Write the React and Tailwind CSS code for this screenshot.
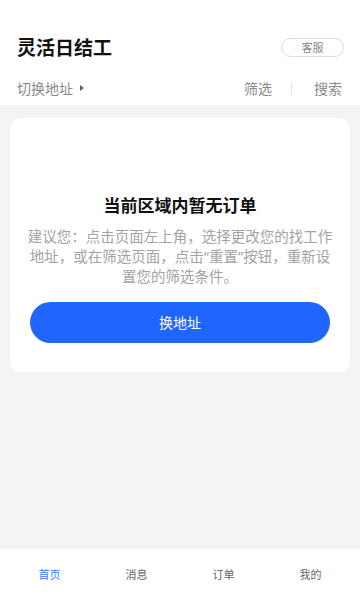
import React from 'react';

const tabs = ['首页', '消息', '订单', '我的'];

const Q = ({ children }) => (
  <span style={{ fontFamily: '"Noto Sans", sans-serif' }}>{children}</span>
);

const App = () => {
  return (
    <div
      className="h-[600px] w-[360px] flex flex-col bg-white overflow-hidden"
      style={{ fontFamily: '"Noto Sans CJK SC", "Noto Sans", sans-serif' }}
    >
      {/* Header */}
      <div className="h-[105px] shrink-0 bg-white">
        <div className="mt-[34px] h-[26px] px-[17px] flex items-center justify-between">
          <h1 className="text-[19px] font-bold text-[#111] leading-[26px]">灵活日结工</h1>
          <button className="w-[63px] h-[19px] mr-[-1px] rounded-full border border-[#dcdcdc] text-[11px] text-[#888] leading-none flex items-center justify-center">
            客服
          </button>
        </div>
        <div className="mt-[17px] h-[22px] pl-[17px] pr-[18px] flex items-center justify-between text-[14px] text-[#8a8a8a]">
          <div className="flex items-center gap-[7px]">
            <span>切换地址</span>
            <span className="w-0 h-0 border-y-[3.5px] border-y-transparent border-l-[4px] border-l-[#666]" />
          </div>
          <div className="flex items-center">
            <span className="ml-[2px]">筛选</span>
            <span className="mx-[19px] w-px h-[13px] bg-[#e5e5e5]" />
            <span className="ml-[3px]">搜索</span>
          </div>
        </div>
      </div>

      {/* Content */}
      <div className="flex-1 bg-[#f3f4f6] pt-[13px] px-[10px]">
        <div className="bg-white rounded-[10px] h-[254px] pt-[75px] px-[12px] text-center">
          <h2 className="text-[17px] font-bold text-[#111] leading-[24px]">当前区域内暂无订单</h2>
          <p className="mt-[9px] text-[14.5px] leading-[20px] text-[#a3a3a3] whitespace-nowrap">
            建议您：点击页面左上角，选择更改您的找工作
            <br />
            地址，或在筛选页面，点击<Q>“</Q>重置<Q>”</Q>按钮，重新设
            <br />
            置您的筛选条件。
          </p>
          <button className="mt-[16px] w-[300px] h-[41px] rounded-full bg-[#1f66ff] text-white text-[14px]">
            换地址
          </button>
        </div>
      </div>

      {/* Bottom nav */}
      <div className="h-[51px] shrink-0 bg-white px-[6px] grid grid-cols-4 items-center">
        {tabs.map((t, i) => (
          <div
            key={t}
            className={`text-center text-[11px] ${i === 0 ? 'text-[#3d7bff]' : 'text-[#666]'}`}
          >
            {t}
          </div>
        ))}
      </div>
    </div>
  );
};

export default App;
